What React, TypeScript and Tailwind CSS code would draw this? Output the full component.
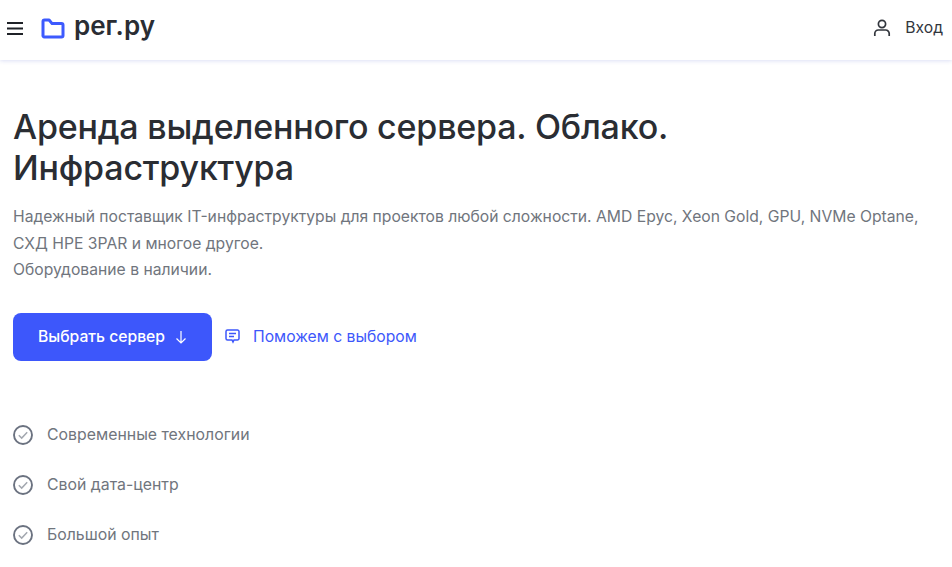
const font = { fontFamily: "Inter, sans-serif" };

const benefits = ["Современные технологии", "Свой дата-центр", "Большой опыт"];

function CheckIcon() {
  return (
    <svg width="20" height="20" viewBox="0 0 20 20" fill="none" className="shrink-0">
      <circle cx="10" cy="10" r="9" stroke="#6b7280" strokeWidth="1.9" />
      <path d="M5.800 10.200l2.900 2.900 5.500-5.800" stroke="#a3a8b0" strokeWidth="1.500" />
    </svg>
  );
}

export default function App() {
  return (
    <div className="w-[952px] h-[567px] overflow-hidden bg-white" style={font}>
      <header className="h-[60px] flex items-center justify-between pl-[7px] pr-[9px] bg-white shadow-[0_1px_4px_rgba(60,80,200,0.18)]">
        <div className="flex items-center">
          <svg width="16" height="13" viewBox="0 0 16 13" fill="none" className="mr-[18px] relative -top-[2px]">
            <path d="M0 1h16M0 6.500h16M0 12h16" stroke="#1f2228" strokeWidth="2" />
          </svg>
          <svg width="24" height="21" viewBox="0 0 24 21" fill="none" className="mr-[9px] relative -top-[2px]">
            <path d="M2 3.500a1.500 1.500 0 0 1 1.500-1.500h4.600l3 3.600h9.400a1.500 1.500 0 0 1 1.500 1.500v10.400a1.500 1.500 0 0 1-1.500 1.500h-17A1.500 1.500 0 0 1 2 17z" stroke="#3d5afe" strokeWidth="3" strokeLinejoin="round" />
          </svg>
          <span className="text-[26px] leading-none font-semibold text-[#2a2d33] relative -top-[4px]">рег.ру</span>
        </div>
        <div className="flex items-center relative -top-[2px]">
          <svg width="18" height="18" viewBox="0 0 18 18" fill="none" className="mr-[14px]">
            <circle cx="9" cy="5" r="3.600" stroke="#32363d" strokeWidth="1.700" />
            <path d="M1.800 17v-2.500A3.500 3.500 0 0 1 5.300 11h7.400a3.500 3.500 0 0 1 3.500 3.500V17" stroke="#32363d" strokeWidth="1.700" />
          </svg>
          <span className="text-[15.7px] text-[#32363d]">Вход</span>
        </div>
      </header>

      <main className="pl-[13px] pr-[20px]">
        <h1 className="mt-[46px] text-[34px] leading-[41px] font-medium text-[#2a2d33] tracking-[-0.2px]">
          Аренда выделенного сервера. Облако.
          <br />
          Инфраструктура
        </h1>
        <p className="mt-[16px] text-[15.7px] leading-[26.5px] text-[#70757d]">
          Надежный поставщик IT-инфраструктуры для проектов любой сложности. AMD Epyc, Xeon Gold, GPU, NVMe Optane,
          <br />
          СХД HPE 3PAR и многое другое.
          <br />
          Оборудование в наличии.
        </p>
        <div className="mt-[29px] flex items-center">
          <button className="w-[199px] h-[48px] flex items-center justify-center rounded-lg bg-[#3d57fb] text-white text-[15.7px] font-medium">
            Выбрать сервер
            <svg width="12" height="14" viewBox="0 0 12 14" fill="none" className="ml-[10px]">
              <path d="M6 1v12M1.500 8.500L6 13l4.500-4.500" stroke="white" strokeWidth="1.200" />
            </svg>
          </button>
          <svg width="15" height="15" viewBox="0 0 15 15" fill="none" className="ml-[13px] mr-[13px]">
            <path d="M1 2.500A1.500 1.500 0 0 1 2.500 1h10A1.500 1.500 0 0 1 14 2.500v7a1.500 1.500 0 0 1-1.500 1.500H9l-1 2-1-2H2.500A1.500 1.500 0 0 1 1 9.500z" stroke="#3d57fb" strokeWidth="1.500" />
            <path d="M4 4.500h7M4 7.500h5" stroke="#3d57fb" strokeWidth="1.300" />
          </svg>
          <a className="text-[15.7px] text-[#3d57fb]">Поможем с выбором</a>
        </div>
        <ul className="mt-[62px] flex flex-col gap-[26px]">
          {benefits.map((b) => (
            <li key={b} className="flex items-center h-[24px] gap-[14px] text-[15.85px] text-[#70757d]">
              <CheckIcon />
              {b}
            </li>
          ))}
        </ul>
      </main>
    </div>
  );
}
